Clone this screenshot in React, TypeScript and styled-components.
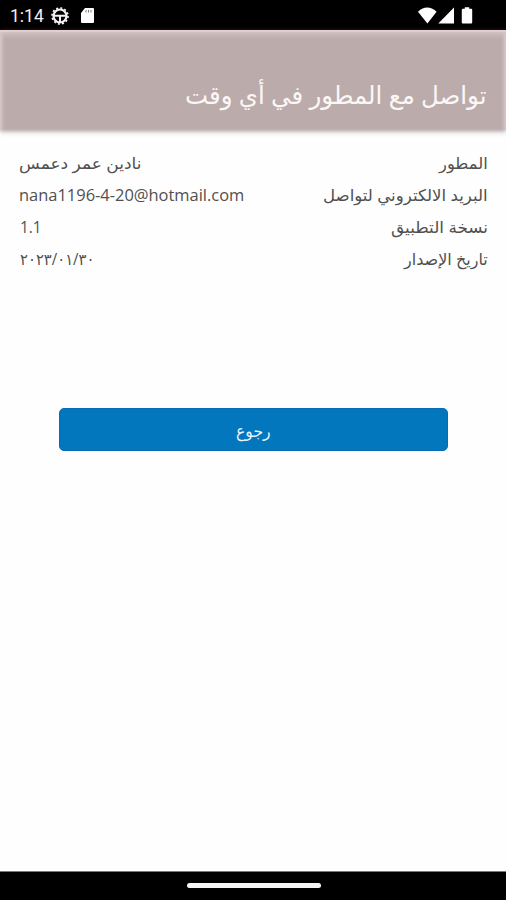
import React, { useLayoutEffect, useRef, useState } from 'react';
import styled, { createGlobalStyle } from 'styled-components';

const GlobalStyle = createGlobalStyle`
  * { box-sizing: border-box; }
  body { margin: 0; background: #fefefe; overflow: hidden; }
`;

const Screen = styled.div`
  width: 506px;
  height: 900px;
  display: flex;
  flex-direction: column;
  background: #fefefe;
  font-family: 'Open Sans', 'DejaVu Sans', sans-serif;
`;

const StatusBar = styled.div`
  height: 30px;
  flex: none;
  background: #000;
  display: flex;
  justify-content: space-between;
  padding: 0 32px 0 10px;
`;

const StatusGroup = styled.div`
  display: flex;
  align-items: center;
  height: 31px;
`;

const Clock = styled.span`
  font: 400 17.5px/30px Roboto, sans-serif;
  color: #f0f0f0;
  width: 40px;
  white-space: nowrap;
`;

const Header = styled.header`
  height: 100px;
  flex: none;
  display: flex;
  padding: 42px 19px 0;
  background: #bbabab;
  box-shadow:
    inset 0 2px 1px #e3cfcf,
    inset 0 5px 6px 0 #d6c4c4,
    inset 3px 0 3px -1px #d6c8c8,
    inset -3px 0 3px -1px #d6c8c8,
    0 1px 5px rgba(90, 75, 75, 0.6);
`;

const Title = styled.h1`
  margin: 0;
  width: 100%;
  display: flex;
  justify-content: flex-end;
  font-weight: 400;
  font-size: 25px;
  line-height: 44px;
  color: #fbf7f7;
`;

const Details = styled.dl`
  margin: 17px 18px 0 19px;
  display: flex;
  flex-direction: column;
`;

const DetailRow = styled.div`
  height: 32px;
  display: flex;
  justify-content: space-between;
  color: #505050;
  font-size: 16px;
  line-height: 32px;
`;

const Label = styled.dt`
  margin: 0;
`;

const Value = styled.dd<{ $indent?: number }>`
  margin: 0 0 0 ${(p) => p.$indent ?? 0}px;
`;

const BackButton = styled.button`
  width: 389px;
  height: 43px;
  margin: 133px 0 0 59px;
  padding: 3px 0 0;
  border: 1px solid #0b6bb0;
  border-radius: 5px;
  background: #0277bd;
  color: #e8f4fc;
  font-family: 'Open Sans', 'DejaVu Sans', sans-serif;
  font-size: 17px;
  line-height: 40px;
  display: flex;
  align-items: center;
  justify-content: center;
`;

const NavigationBar = styled.div`
  height: 29px;
  flex: none;
  margin-top: auto;
  border-top: 1px solid #777;
  background: #000;
  display: flex;
  justify-content: center;
  padding: 11px 0 0 1px;
`;

const HomeHandle = styled.div`
  width: 134px;
  height: 5px;
  border-radius: 3px;
  background: #f4f4f4;
`;

const FitBox = styled.span<{ $width: number }>`
  display: block;
  width: ${(p) => p.$width}px;
  white-space: nowrap;
`;

const FitInner = styled.span`
  display: inline-block;
  transform-origin: left center;
`;

/* Condenses or widens a line of text so that it fills the given width. */
function FitText({ width, dir, children }: { width: number; dir?: 'rtl' | 'ltr'; children: string }) {
  const ref = useRef<HTMLSpanElement>(null);
  const [scale, setScale] = useState(1);
  useLayoutEffect(() => {
    if (ref.current) setScale(width / ref.current.offsetWidth);
  }, [width, children]);
  return (
    <FitBox $width={width}>
      <FitInner ref={ref} dir={dir} style={{ transform: `scaleX(${scale})` }}>
        {children}
      </FitInner>
    </FitBox>
  );
}

const GearIcon = () => (
  <svg width="20" height="20" viewBox="0 0 20 20" fill="none" stroke="#f2f2f2">
    <circle cx="10" cy="10" r="8" strokeWidth="1.6" strokeDasharray="2.1 2.09" />
    <circle cx="10" cy="10" r="6.5" strokeWidth="2.2" />
    <path d="M4 9.8h12M10 10v6" strokeWidth="2" />
  </svg>
);

const CardIcon = styled.svg`
  margin-left: 10px;
`;

const rows = [
  { label: 'المطور', labelWidth: 49, value: 'نادين عمر دعمس', valueWidth: 122, dir: 'rtl' as const },
  { label: 'البريد الالكتروني لتواصل', labelWidth: 165, value: 'nana1196-4-20@hotmail.com', valueWidth: 225 },
  { label: 'نسخة التطبيق', labelWidth: 97, value: '1.1', valueWidth: 22, indent: 1 },
  { label: 'تاريخ الإصدار', labelWidth: 84, value: '٢٠٢٣/٠١/٣٠', valueWidth: 74, indent: 1 },
];

export default function App() {
  return (
    <Screen>
      <GlobalStyle />
      <StatusBar>
        <StatusGroup>
          <Clock>1:14</Clock>
          <GearIcon />
          <CardIcon width="15" height="17" viewBox="0 0 15 17">
            <path d="M5 1h8q1 0 1 1v13q0 1-1 1H2q-1 0-1-1V6z" fill="#fff" />
            <path d="M6 3v2.5M8.5 3v2.5M11 3v2.5" stroke="#777" strokeWidth="1" />
          </CardIcon>
        </StatusGroup>
        <StatusGroup>
          <svg width="56" height="18" viewBox="0 0 56 18" fill="#fff">
            <path d="M0 4.7Q9 -3.7 18.6 4.7L9.4 16.5z" />
            <path d="M20.3 16.5H36V.5z" />
            <path d="M46.8.2h4.4v1.5h2q1 0 1 1V15.5q0 1-1 1h-8.4q-1 0-1-1V2.7q0-1 1-1h2z" />
          </svg>
        </StatusGroup>
      </StatusBar>
      <Header>
        <Title>
          <FitText width={302} dir="rtl">تواصل مع المطور في أي وقت</FitText>
        </Title>
      </Header>
      <Details>
        {rows.map((row) => (
          <DetailRow key={row.label}>
            <Value $indent={row.indent}>
              <FitText width={row.valueWidth} dir={row.dir}>{row.value}</FitText>
            </Value>
            <Label>
              <FitText width={row.labelWidth} dir="rtl">{row.label}</FitText>
            </Label>
          </DetailRow>
        ))}
      </Details>
      <BackButton type="button">
        <FitText width={35} dir="rtl">رجوع</FitText>
      </BackButton>
      <NavigationBar>
        <HomeHandle />
      </NavigationBar>
    </Screen>
  );
}
